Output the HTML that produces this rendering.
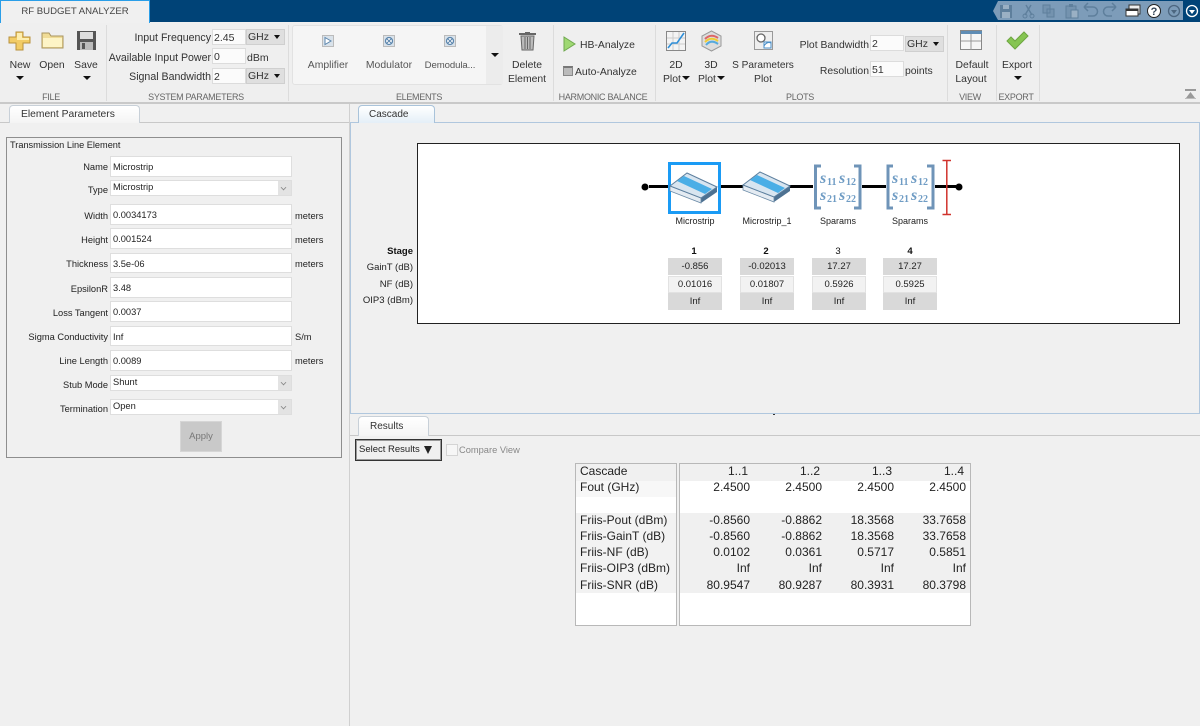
<!DOCTYPE html>
<html><head><meta charset="utf-8"><style>
html,body{margin:0;padding:0}
body{width:1200px;height:726px;overflow:hidden;background:#f0f0f0;position:relative;font-family:"Liberation Sans",sans-serif;color:#222;filter:blur(.3px)}
div,span,svg{position:absolute}
.t{white-space:nowrap;font-size:10.4px;line-height:14px;color:#333}
.c{text-align:center;transform:translateX(-50%)}
.r{text-align:right}
.sec{top:91px;font-size:9px;letter-spacing:-.3px;line-height:12px;color:#666;white-space:nowrap;text-align:center;transform:translateX(-50%)}
.sep{top:25px;height:76px;width:1px;background:#dcdcdc}
.in{background:#fbfbfb;border:1px solid #dcdcdc;box-sizing:border-box;font-size:10.5px;line-height:16px;color:#333;padding-left:1px;height:16px}
.dd{background:#dfdfdf;border:1px solid #cfcfcf;box-sizing:border-box;font-size:10.5px;line-height:15px;color:#333;padding-left:1px;height:16px}
.dd i{position:absolute;right:4px;top:5px;border:3.5px solid transparent;border-top:4px solid #111;border-bottom:0}
.arr{position:absolute;width:0;height:0;border:4px solid transparent;border-top:4px solid #111;border-bottom:0}
.f{left:110px;width:182px;background:#fff;border:1px solid #dedede;box-sizing:border-box;font-size:9.3px;line-height:20px;padding-left:2px;color:#222;white-space:nowrap}
.l{right:1092px;font-size:9.3px;white-space:nowrap;line-height:12px;color:#222;margin-top:1px}
.u{left:295px;font-size:9.3px;line-height:12px;color:#222;margin-top:1px}
.sel{line-height:13px;height:16px;padding-left:2px}
.sel b{position:absolute;right:0;top:0;bottom:0;width:13px;background:#e3e3e3;font-weight:normal}
.sel b:after{content:"";position:absolute;left:3px;top:4px;width:4px;height:4px;border:solid #888;border-width:0 1px 1px 0;transform:rotate(45deg) scale(.8)}
.tab{box-sizing:border-box;background:linear-gradient(#fff,#f4f4f4);border:1px solid #c4d0dc;border-bottom:0;border-radius:4px 4px 0 0;font-size:10.3px;padding-left:11px;color:#333;white-space:nowrap}
.cell{width:54px;height:17px;text-align:center;font-size:9.5px;color:#222;box-sizing:border-box}
.sg{background:#d9d9d9;line-height:18px}.sw{background:#f2f2f2;border:1px solid #e2e2e2;line-height:15px}
.hd{width:54px;text-align:center;font-size:9.5px;font-weight:bold;line-height:11px;color:#111}
.cap{font-size:9px;line-height:11px;color:#222;white-space:nowrap;text-align:center;transform:translateX(-50%)}
.sl{font-size:9.5px;right:787px;line-height:12px;color:#222;white-space:nowrap}
.rl{left:580px;font-size:12px;line-height:14px;color:#222;white-space:nowrap}
.rv{font-size:12px;line-height:14px;color:#222;text-align:right;width:70px;white-space:nowrap}
</style></head><body>

<!-- title bar -->
<div style="left:0;top:0;width:1200px;height:22px;background:#004377"></div>
<div style="left:0;top:0;width:150px;height:23px;background:#f0f0f0;box-sizing:border-box;border-top:1px solid #2a9ee8;border-left:1px solid #2a9ee8;border-right:1px solid #2a9ee8"></div>
<div class="t c" style="left:75px;top:5px;font-size:9.6px;color:#444">RF BUDGET ANALYZER</div>

<!-- QAT -->
<svg style="left:990px;top:0" width="210" height="22" viewBox="0 0 210 22">
<path d="M3 11L8 1H193V20H8Z" fill="#7d9cb9"/>
<path d="M10 5H22V18H10Z" fill="#5e7f9c"/><rect x="13" y="5" width="6" height="4" fill="#9ab0c4"/><rect x="12" y="12" width="8" height="6" fill="#9ab0c4"/>
<path d="M36 5L42 15M41 5L35 15" stroke="#5e7f9c" stroke-width="1.4" fill="none"/><circle cx="35" cy="16" r="2" fill="none" stroke="#5e7f9c"/><circle cx="42" cy="16" r="2" fill="none" stroke="#5e7f9c"/>
<path d="M53 5H60V13H53ZM57 9H64V17H57Z" fill="#7493af" stroke="#5e7f9c"/>
<path d="M76 6H86V18H76Z" fill="#7493af" stroke="#5e7f9c"/><rect x="79" y="4" width="4" height="3" fill="#5e7f9c"/><rect x="81" y="10" width="7" height="8" fill="#9ab0c4" stroke="#5e7f9c"/>
<path d="M94 7H103A4.500 4.500 0 0 1 103 16H98M94 7L98 3M94 7L98 11" stroke="#5e7f9c" stroke-width="1.500" fill="none"/>
<path d="M126 7H118A4.500 4.500 0 0 0 118 16H122M126 7L122 3M126 7L122 11" stroke="#5e7f9c" stroke-width="1.500" fill="none"/>
<rect x="139" y="5" width="11" height="9" fill="#eee" stroke="#333"/><rect x="136" y="9" width="12" height="7" fill="#fff" stroke="#333"/><rect x="136" y="9" width="12" height="2" fill="#333"/>
<circle cx="164" cy="11" r="6.500" fill="#fff" stroke="#222"/><text x="164" y="15" font-size="11" font-weight="bold" text-anchor="middle" font-family="Liberation Sans" fill="#345">?</text>
<circle cx="184" cy="11" r="5.500" fill="none" stroke="#4c6680" stroke-width="1.300"/><path d="M181 10H187L184 14Z" fill="#4c6680"/>
<circle cx="202" cy="11" r="5.500" fill="none" stroke="#fff" stroke-width="1.300"/><path d="M199 10H205L202 14Z" fill="#fff"/>
</svg>

<!-- ribbon -->
<div style="left:0;top:23px;width:1200px;height:79px;background:#efefef"></div>
<div style="left:0;top:102px;width:1200px;height:2px;background:#c9c9c9"></div>
<div class="sep" style="left:106px"></div><div class="sep" style="left:288px"></div><div class="sep" style="left:553px"></div><div class="sep" style="left:655px"></div><div class="sep" style="left:947px"></div><div class="sep" style="left:996px"></div><div class="sep" style="left:1039px"></div>

<!-- File -->
<svg style="left:8px;top:31px" width="24" height="20"><path d="M8 1H15V6H22V12H15V19H8V12H1V6H8Z" fill="#f2cc66" stroke="#b8923c"/><path d="M9 2H14V7H21V9H9Z" fill="#fdeeb0"/></svg>
<svg style="left:41px;top:31px" width="23" height="18"><path d="M1 2H8L10 5H22V17H1Z" fill="#f0dc96" stroke="#a9945f"/><path d="M2 7H21V16H2Z" fill="#fdf4c6"/></svg>
<svg style="left:76px;top:30px" width="21" height="21"><path d="M1 1H20V20H1Z" fill="#555"/><rect x="4" y="2" width="13" height="7" fill="#ddd"/><rect x="4" y="12" width="13" height="8" fill="#bbb"/><rect x="6" y="13" width="3" height="6" fill="#555"/></svg>
<div class="t c" style="left:20px;top:59px">New</div><div class="t c" style="left:52px;top:59px">Open</div><div class="t c" style="left:86px;top:59px">Save</div>
<i class="arr" style="left:16px;top:76px"></i><i class="arr" style="left:83px;top:76px"></i>
<div class="sec" style="left:51px">FILE</div>

<!-- System params -->
<div class="t r" style="right:989px;top:31px;font-size:10.6px">Input Frequency</div>
<div class="t r" style="right:989px;top:51px;font-size:10.6px">Available Input Power</div>
<div class="t r" style="right:989px;top:70px;font-size:10.6px">Signal Bandwidth</div>
<div class="in" style="left:212px;top:29px;width:34px">2.45</div>
<div class="in" style="left:212px;top:48px;width:34px">0</div>
<div class="in" style="left:212px;top:68px;width:34px">2</div>
<div class="dd" style="left:246px;top:29px;width:39px">GHz<i></i></div>
<div class="t" style="left:247px;top:51px;font-size:10.5px">dBm</div>
<div class="dd" style="left:246px;top:68px;width:39px">GHz<i></i></div>
<div class="sec" style="left:196px">SYSTEM PARAMETERS</div>

<!-- Elements -->
<div style="left:292px;top:25px;width:211px;height:60px;background:#f5f5f5;border:1px solid #e2e2e2;border-radius:3px;box-sizing:border-box"></div>
<div style="left:486px;top:26px;width:17px;height:58px;background:#ececec"></div>
<i class="arr" style="left:491px;top:53px"></i>
<svg style="left:322px;top:35px" width="12" height="12"><rect x=".5" y=".5" width="11" height="11" fill="#d9e2ea" stroke="#bbb"/><path d="M3 2.500L9 6L3 9.500Z" fill="#fff" stroke="#5c86ad"/></svg>
<svg style="left:383px;top:35px" width="12" height="12"><rect x=".5" y=".5" width="11" height="11" fill="#d9e2ea" stroke="#bbb"/><circle cx="6" cy="6" r="3.500" fill="#fff" stroke="#5c86ad" stroke-width="1.300"/><path d="M3.500 3.500L8.500 8.500M8.500 3.500L3.500 8.500" stroke="#5c86ad"/></svg>
<svg style="left:444px;top:35px" width="12" height="12"><rect x=".5" y=".5" width="11" height="11" fill="#d9e2ea" stroke="#bbb"/><circle cx="6" cy="6" r="3.500" fill="#fff" stroke="#5c86ad" stroke-width="1.300"/><path d="M3.500 3.500L8.500 8.500M8.500 3.500L3.500 8.500" stroke="#5c86ad"/></svg>
<div class="t c" style="left:328px;top:59px;color:#555">Amplifier</div>
<div class="t c" style="left:389px;top:59px;color:#555">Modulator</div>
<div class="t c" style="left:450px;top:59px;color:#555;font-size:9.6px;letter-spacing:-.1px">Demodula...</div>
<div class="sec" style="left:419px">ELEMENTS</div>

<!-- Delete -->
<svg style="left:518px;top:31px" width="19" height="20"><path d="M1 3H18" stroke="#666" stroke-width="2"/><rect x="7" y="1" width="5" height="2" fill="#666"/><path d="M3 5H16L15 19H4Z" fill="#bbb" stroke="#666"/><path d="M7 6V18M9.500 6V18M12 6V18" stroke="#666"/></svg>
<div class="t c" style="left:527px;top:59px">Delete</div><div class="t c" style="left:527px;top:73px">Element</div>

<!-- HB -->
<svg style="left:563px;top:36px" width="13" height="16"><path d="M1 1L12 8L1 15Z" fill="#9fd873" stroke="#6fa84e"/></svg>
<div class="t" style="left:580px;top:39px">HB-Analyze</div>
<div style="left:563px;top:66px;width:10px;height:10px;box-sizing:border-box;background:#bbb;border:1px solid #888;border-top:2px solid #777"></div>
<div class="t" style="left:575px;top:66px">Auto-Analyze</div>
<div class="sec" style="left:603px">HARMONIC BALANCE</div>

<!-- Plots -->
<svg style="left:666px;top:31px" width="20" height="20"><rect x=".5" y=".5" width="19" height="19" fill="#f4f4f4" stroke="#888"/><path d="M1 7H19M1 13H19M7 1V19M13 1V19" stroke="#ccc"/><path d="M2 17L6 12H11L18 2" stroke="#2f8fd8" stroke-width="1.600" fill="none"/></svg>
<svg style="left:701px;top:30px" width="21" height="22"><path d="M10.500 1L20 6V16L10.500 21L1 16V6Z" fill="#ddd" stroke="#999"/><path d="M4 9Q10 3 17 8" stroke="#d66" stroke-width="2" fill="none"/><path d="M4 12Q10 6 17 11" stroke="#ec3" stroke-width="2" fill="none"/><path d="M5 15Q10 9 17 14" stroke="#5ad" stroke-width="2" fill="none"/></svg>
<svg style="left:754px;top:31px" width="19" height="19"><rect x=".5" y=".5" width="18" height="18" fill="#eee" stroke="#999"/><circle cx="7" cy="7" r="4" fill="#fff" stroke="#666" stroke-width="1.300"/><rect x="10" y="11" width="7" height="6" fill="#fff" stroke="#4a8fc8"/><path d="M10 15Q13 10 17 12" stroke="#4a8fc8" fill="none"/></svg>
<div class="t c" style="left:676px;top:59px">2D</div><div class="t" style="left:663px;top:73px">Plot</div><i class="arr" style="left:682px;top:76px"></i>
<div class="t c" style="left:711px;top:59px">3D</div><div class="t" style="left:698px;top:73px">Plot</div><i class="arr" style="left:717px;top:76px"></i>
<div class="t c" style="left:763px;top:59px;font-size:10.1px">S Parameters</div><div class="t c" style="left:763px;top:73px">Plot</div>
<div class="sec" style="left:800px">PLOTS</div>
<div class="t r" style="right:331px;top:39px">Plot Bandwidth</div>
<div class="in" style="left:870px;top:35px;width:34px">2</div>
<div class="dd" style="left:905px;top:36px;width:39px">GHz<i></i></div>
<div class="t r" style="right:331px;top:65px">Resolution</div>
<div class="in" style="left:870px;top:61px;width:34px">51</div>
<div class="t" style="left:905px;top:65px">points</div>

<!-- View -->
<svg style="left:960px;top:30px" width="23" height="21"><rect x=".5" y=".5" width="21" height="19" fill="#f6f6f6" stroke="#888"/><rect x="1" y="1" width="21" height="3" fill="#5f8db5"/><path d="M1 11H21M11 4V20" stroke="#999"/></svg>
<div class="t c" style="left:972px;top:59px">Default</div><div class="t c" style="left:971px;top:73px">Layout</div>
<div class="sec" style="left:970px">VIEW</div>

<!-- Export -->
<svg style="left:1006px;top:31px" width="23" height="19"><path d="M1 10L5 6L9 10L18 1L22 5L9 18Z" fill="#86c552" stroke="#6da640"/></svg>
<div class="t c" style="left:1017px;top:59px">Export</div><i class="arr" style="left:1014px;top:76px"></i>
<div class="sec" style="left:1016px">EXPORT</div>
<svg style="left:1185px;top:89px" width="12" height="11"><rect width="11" height="2" fill="#999"/><path d="M1 9L5.500 3L10 9Z" fill="#999"/><rect y="9" width="11" height="1" fill="#bbb"/></svg>

<!-- Left panel -->
<div style="left:349px;top:104px;width:1px;height:622px;background:#d0d0d0"></div>
<div style="left:0;top:122px;width:349px;height:1px;background:#c8c8c8"></div>
<div class="tab" style="left:9px;top:105px;width:131px;height:18px;line-height:17px;border-color:#c8d0d8">Element Parameters</div>

<div style="left:6px;top:137px;width:336px;height:321px;box-sizing:border-box;border:1px solid #8e8e8e"></div>
<div class="t" style="left:10px;top:138px;font-size:9.2px;color:#222">Transmission Line Element</div>

<div class="l" style="top:160px">Name</div><div class="f" style="top:156px;height:21px">Microstrip</div>
<div class="l" style="top:183px">Type</div><div class="f sel" style="top:180px">Microstrip<b></b></div>
<div class="l" style="top:209px">Width</div><div class="f" style="top:204px;height:21px">0.0034173</div><div class="u" style="top:209px">meters</div>
<div class="l" style="top:233px">Height</div><div class="f" style="top:228px;height:21px">0.001524</div><div class="u" style="top:233px">meters</div>
<div class="l" style="top:257px">Thickness</div><div class="f" style="top:253px;height:20px">3.5e-06</div><div class="u" style="top:257px">meters</div>
<div class="l" style="top:282px">EpsilonR</div><div class="f" style="top:277px;height:21px">3.48</div>
<div class="l" style="top:306px">Loss Tangent</div><div class="f" style="top:301px;height:21px">0.0037</div>
<div class="l" style="top:330px">Sigma Conductivity</div><div class="f" style="top:326px;height:20px">Inf</div><div class="u" style="top:330px">S/m</div>
<div class="l" style="top:354px">Line Length</div><div class="f" style="top:350px;height:21px">0.0089</div><div class="u" style="top:354px">meters</div>
<div class="l" style="top:378px">Stub Mode</div><div class="f sel" style="top:375px">Shunt<b></b></div>
<div class="l" style="top:402px">Termination</div><div class="f sel" style="top:399px">Open<b></b></div>
<div style="left:180px;top:421px;width:42px;height:31px;background:#c9c9c9;border:1px solid #d6d6d6;box-sizing:border-box;text-align:center;font-size:9.5px;line-height:29px;color:#777">Apply</div>

<!-- Cascade -->
<div style="left:350px;top:122px;width:850px;height:292px;box-sizing:border-box;border:1px solid #b0c7de"></div>
<div class="tab" style="left:358px;top:105px;width:77px;height:18px;line-height:17px;border-color:#a9c3da;background:linear-gradient(#fff,#e4eef7);font-size:10px;padding-left:10px">Cascade</div>
<div style="left:417px;top:143px;width:763px;height:181px;background:#fff;border:1px solid #222;box-sizing:border-box"></div>

<svg style="left:630px;top:145px" width="340" height="75" viewBox="0 0 340 75">
<path d="M19 41.500H326" stroke="#000" stroke-width="3"/>
<circle cx="15" cy="42" r="3.500" fill="#000"/><circle cx="329" cy="42" r="3.500" fill="#000"/>
<rect x="39.500" y="18.500" width="50" height="49" fill="#fff" stroke="#1a9bf5" stroke-width="3"/>
<g>
<path d="M71 53L87 42V47L71 58Z" fill="#4d7191"/>
<path d="M40 41L71 53V58L40 46Z" fill="#e4ebf2" stroke="#6a8aa6" stroke-width=".8"/>
<path d="M40 41L57 28L87 42L71 53Z" fill="#d8e5f0" stroke="#5c7f9e"/>
<path d="M47 36L54 31L82 44L75 49Z" fill="#4aaee6"/>
</g>
<g transform="translate(73,-1)">
<path d="M71 53L87 42V47L71 58Z" fill="#4d7191"/>
<path d="M40 41L71 53V58L40 46Z" fill="#e4ebf2" stroke="#6a8aa6" stroke-width=".8"/>
<path d="M40 41L57 28L87 42L71 53Z" fill="#d8e5f0" stroke="#5c7f9e"/>
<path d="M47 36L54 31L82 44L75 49Z" fill="#4aaee6"/>
</g>
<rect x="183" y="18" width="49" height="47" fill="#fff"/><rect x="256" y="18" width="49" height="47" fill="#fff"/>
<path d="M191 21H185.500V63H191M224 21H230V63H224" fill="none" stroke="#6f94b8" stroke-width="3"/>
<path d="M263 21H258V63H263M297 21H303V63H297" fill="none" stroke="#6f94b8" stroke-width="3"/>
<g font-family="Liberation Serif" font-weight="bold" fill="#6f9cc4">
<text x="190" y="38" font-size="16" font-style="italic">s</text><text x="197" y="40" font-size="10">11</text><text x="209" y="38" font-size="16" font-style="italic">s</text><text x="216" y="40" font-size="10">12</text>
<text x="190" y="55" font-size="16" font-style="italic">s</text><text x="197" y="57" font-size="10">21</text><text x="209" y="55" font-size="16" font-style="italic">s</text><text x="216" y="57" font-size="10">22</text>
<text x="262" y="38" font-size="16" font-style="italic">s</text><text x="269" y="40" font-size="10">11</text><text x="281" y="38" font-size="16" font-style="italic">s</text><text x="288" y="40" font-size="10">12</text>
<text x="262" y="55" font-size="16" font-style="italic">s</text><text x="269" y="57" font-size="10">21</text><text x="281" y="55" font-size="16" font-style="italic">s</text><text x="288" y="57" font-size="10">22</text>
</g>
<path d="M312.500 15.500H321M316.800 15.500V69.500M312.500 69.500H321" stroke="#d0332d" stroke-width="1.500" fill="none"/>
</svg>

<div class="cap" style="left:695px;top:216px">Microstrip</div>
<div class="cap" style="left:767px;top:216px">Microstrip_1</div>
<div class="cap" style="left:838px;top:216px">Sparams</div>
<div class="cap" style="left:910px;top:216px">Sparams</div>

<div class="sl" style="top:246px;font-weight:bold;color:#111">Stage</div>
<div class="sl" style="top:262px">GainT (dB)</div>
<div class="sl" style="top:279px">NF (dB)</div>
<div class="sl" style="top:295px">OIP3 (dBm)</div>

<div class="hd" style="left:667px;top:246px">1</div><div class="hd" style="left:739px;top:246px">2</div><div class="hd" style="left:811px;top:246px;font-weight:normal">3</div><div class="hd" style="left:883px;top:246px">4</div>
<div class="cell sg" style="left:668px;top:258px">-0.856</div><div class="cell sw" style="left:668px;top:276px">0.01016</div><div class="cell sg" style="left:668px;top:293px">Inf</div>
<div class="cell sg" style="left:740px;top:258px">-0.02013</div><div class="cell sw" style="left:740px;top:276px">0.01807</div><div class="cell sg" style="left:740px;top:293px">Inf</div>
<div class="cell sg" style="left:812px;top:258px">17.27</div><div class="cell sw" style="left:812px;top:276px">0.5926</div><div class="cell sg" style="left:812px;top:293px">Inf</div>
<div class="cell sg" style="left:883px;top:258px">17.27</div><div class="cell sw" style="left:883px;top:276px">0.5925</div><div class="cell sg" style="left:883px;top:293px">Inf</div>

<!-- Results -->
<div style="left:350px;top:435px;width:850px;height:1px;background:#c8c8c8"></div>
<div class="tab" style="left:358px;top:416px;width:71px;height:20px;line-height:19px;border-color:#c8d0d8;font-size:10px">Results</div>
<div style="left:773px;top:414px;width:2px;height:1px;background:#333"></div>
<div style="left:355px;top:439px;width:87px;height:22px;box-sizing:border-box;border:1px solid #333;box-shadow:inset 0 0 0 1px #999;background:#f0f0f0;font-size:9.5px;line-height:20px;padding-left:3px;white-space:nowrap;color:#222">Select Results</div>
<div style="left:424px;top:446px;width:0;height:0;border:4px solid transparent;border-top:8px solid #222;border-bottom:0"></div>
<div style="left:446px;top:444px;width:12px;height:12px;box-sizing:border-box;border:1px solid #d4d4d4;background:#f6f6f6"></div>
<div class="t" style="left:459px;top:444px;font-size:9.3px;line-height:12px;color:#888">Compare View</div>

<div style="left:575px;top:463px;width:102px;height:163px;box-sizing:border-box;background:#fff;border:1px solid #b8b8b8"></div>
<div style="left:679px;top:463px;width:292px;height:163px;box-sizing:border-box;background:#fff;border:1px solid #b8b8b8"></div>
<div style="left:576px;top:464px;width:100px;height:17px;background:#f0f0f0"></div>
<div style="left:576px;top:481px;width:100px;height:16px;background:#f7f7f7"></div>
<div style="left:576px;top:513px;width:100px;height:80px;background:#f2f2f2"></div>
<div style="left:680px;top:464px;width:290px;height:17px;background:#f0f0f0"></div>
<div style="left:680px;top:513px;width:290px;height:80px;background:#f0f0f0"></div>

<div class="rl" style="top:464px">Cascade</div>
<div class="rl" style="top:480px">Fout (GHz)</div>
<div class="rl" style="top:513px">Friis-Pout (dBm)</div>
<div class="rl" style="top:529px">Friis-GainT (dB)</div>
<div class="rl" style="top:545px">Friis-NF (dB)</div>
<div class="rl" style="top:561px">Friis-OIP3 (dBm)</div>
<div class="rl" style="top:578px">Friis-SNR (dB)</div>

<div class="rv" style="left:678px;top:464px">1..1</div><div class="rv" style="left:750px;top:464px">1..2</div><div class="rv" style="left:822px;top:464px">1..3</div><div class="rv" style="left:894px;top:464px">1..4</div>
<div class="rv" style="left:680px;top:480px">2.4500</div><div class="rv" style="left:752px;top:480px">2.4500</div><div class="rv" style="left:824px;top:480px">2.4500</div><div class="rv" style="left:896px;top:480px">2.4500</div>
<div class="rv" style="left:680px;top:513px">-0.8560</div><div class="rv" style="left:752px;top:513px">-0.8862</div><div class="rv" style="left:824px;top:513px">18.3568</div><div class="rv" style="left:896px;top:513px">33.7658</div>
<div class="rv" style="left:680px;top:529px">-0.8560</div><div class="rv" style="left:752px;top:529px">-0.8862</div><div class="rv" style="left:824px;top:529px">18.3568</div><div class="rv" style="left:896px;top:529px">33.7658</div>
<div class="rv" style="left:680px;top:545px">0.0102</div><div class="rv" style="left:752px;top:545px">0.0361</div><div class="rv" style="left:824px;top:545px">0.5717</div><div class="rv" style="left:896px;top:545px">0.5851</div>
<div class="rv" style="left:680px;top:561px">Inf</div><div class="rv" style="left:752px;top:561px">Inf</div><div class="rv" style="left:824px;top:561px">Inf</div><div class="rv" style="left:896px;top:561px">Inf</div>
<div class="rv" style="left:680px;top:578px">80.9547</div><div class="rv" style="left:752px;top:578px">80.9287</div><div class="rv" style="left:824px;top:578px">80.3931</div><div class="rv" style="left:896px;top:578px">80.3798</div>
</body></html>
